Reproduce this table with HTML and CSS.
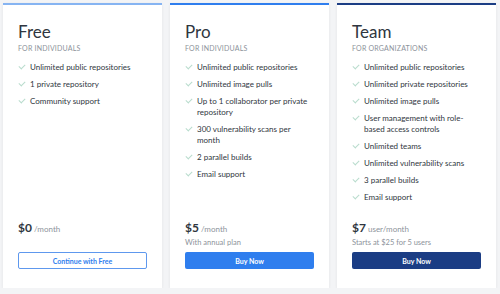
FILE: index.html
```html
<!DOCTYPE html>
<html lang="en">
<head>
  <meta charset="UTF-8">
  <meta name="viewport" content="width=device-width, initial-scale=1.0">
  <title>Pricing</title>
  <link rel="stylesheet" href="styles.css">
</head>
<body>
  <div class="plans">
    <div class="plan plan-free">
      <h2>Free</h2>
      <p class="audience">For individuals</p>
      <ul class="features">
        <li>Unlimited public repositories</li>
        <li>1 private repository</li>
        <li>Community support</li>
      </ul>
      <div class="price"><strong>$0</strong> /month</div>
      <p class="note"></p>
      <button class="btn btn-outline">Continue with Free</button>
    </div>

    <div class="plan plan-pro">
      <h2>Pro</h2>
      <p class="audience">For individuals</p>
      <ul class="features">
        <li>Unlimited public repositories</li>
        <li>Unlimited image pulls</li>
        <li>Up to 1 collaborator per private repository</li>
        <li>300 vulnerability scans per month</li>
        <li>2 parallel builds</li>
        <li>Email support</li>
      </ul>
      <div class="price"><strong>$5</strong> /month</div>
      <p class="note">With annual plan</p>
      <button class="btn btn-primary">Buy Now</button>
    </div>

    <div class="plan plan-team">
      <h2>Team</h2>
      <p class="audience">For organizations</p>
      <ul class="features">
        <li>Unlimited public repositories</li>
        <li>Unlimited private repositories</li>
        <li>Unlimited image pulls</li>
        <li>User management with role-based access controls</li>
        <li>Unlimited teams</li>
        <li>Unlimited vulnerability scans</li>
        <li>3 parallel builds</li>
        <li>Email support</li>
      </ul>
      <div class="price"><strong>$7</strong> user/month</div>
      <p class="note">Starts at $25 for 5 users</p>
      <button class="btn btn-dark">Buy Now</button>
    </div>
  </div>
</body>
</html>
```

FILE: styles.css
```css
:root {
  --text: #2f3640;
  --muted: #8d939b;
  --check: #b9dccd;
  --light-blue: #86b4f2;
  --blue: #2f7eee;
  --navy: #1b3d84;
}

* {
  margin: 0;
  padding: 0;
  box-sizing: border-box;
}

body {
  font-family: Lato, "Liberation Sans", sans-serif;
  background-color: #f3f4f6;
  color: var(--text);
}

.plans {
  display: grid;
  grid-template-columns: repeat(3, 1fr);
  gap: 8px;
  padding: 3px 4px 0 3px;
  height: 288px;
}

.plan {
  background: white;
  border-top: 2px solid var(--light-blue);
  box-shadow: 0 1px 3px rgba(0, 0, 0, 0.07);
  padding: 17px 15px 19px;
  display: flex;
  flex-direction: column;
}

.plan-pro {
  border-top-color: var(--blue);
}

.plan-team {
  border-top-color: var(--navy);
}

h2 {
  font-size: 17px;
  line-height: 20px;
  font-weight: 400;
}

.audience {
  margin-top: 1px;
  font-size: 7px;
  line-height: 10px;
  text-transform: uppercase;
  letter-spacing: 0.2px;
  color: var(--muted);
}

.features {
  list-style: none;
  margin-top: 9px;
  flex: 1;
}

.features li {
  position: relative;
  padding-left: 12px;
  font-size: 8px;
  line-height: 11px;
  margin-bottom: 6px;
}

.features li::before {
  content: "";
  position: absolute;
  left: 1px;
  top: 2px;
  width: 5px;
  height: 3px;
  border-left: 1px solid var(--check);
  border-bottom: 1px solid var(--check);
  transform: rotate(-45deg);
}

.price {
  font-size: 8px;
  line-height: 14px;
  color: var(--muted);
}

.price strong {
  font-size: 12px;
  font-weight: 700;
  color: var(--text);
}

.note {
  margin-top: 2px;
  height: 10px;
  font-size: 7.5px;
  line-height: 10px;
  color: var(--muted);
}

.btn {
  margin-top: 4px;
  height: 17px;
  border-radius: 2px;
  font-family: inherit;
  font-size: 7px;
  font-weight: 700;
  cursor: pointer;
}

.btn-outline {
  background: white;
  color: var(--blue);
  border: 1px solid #5e98ee;
}

.btn-primary {
  background: var(--blue);
  color: white;
  border: none;
}

.btn-dark {
  background: var(--navy);
  color: white;
  border: none;
}
```
